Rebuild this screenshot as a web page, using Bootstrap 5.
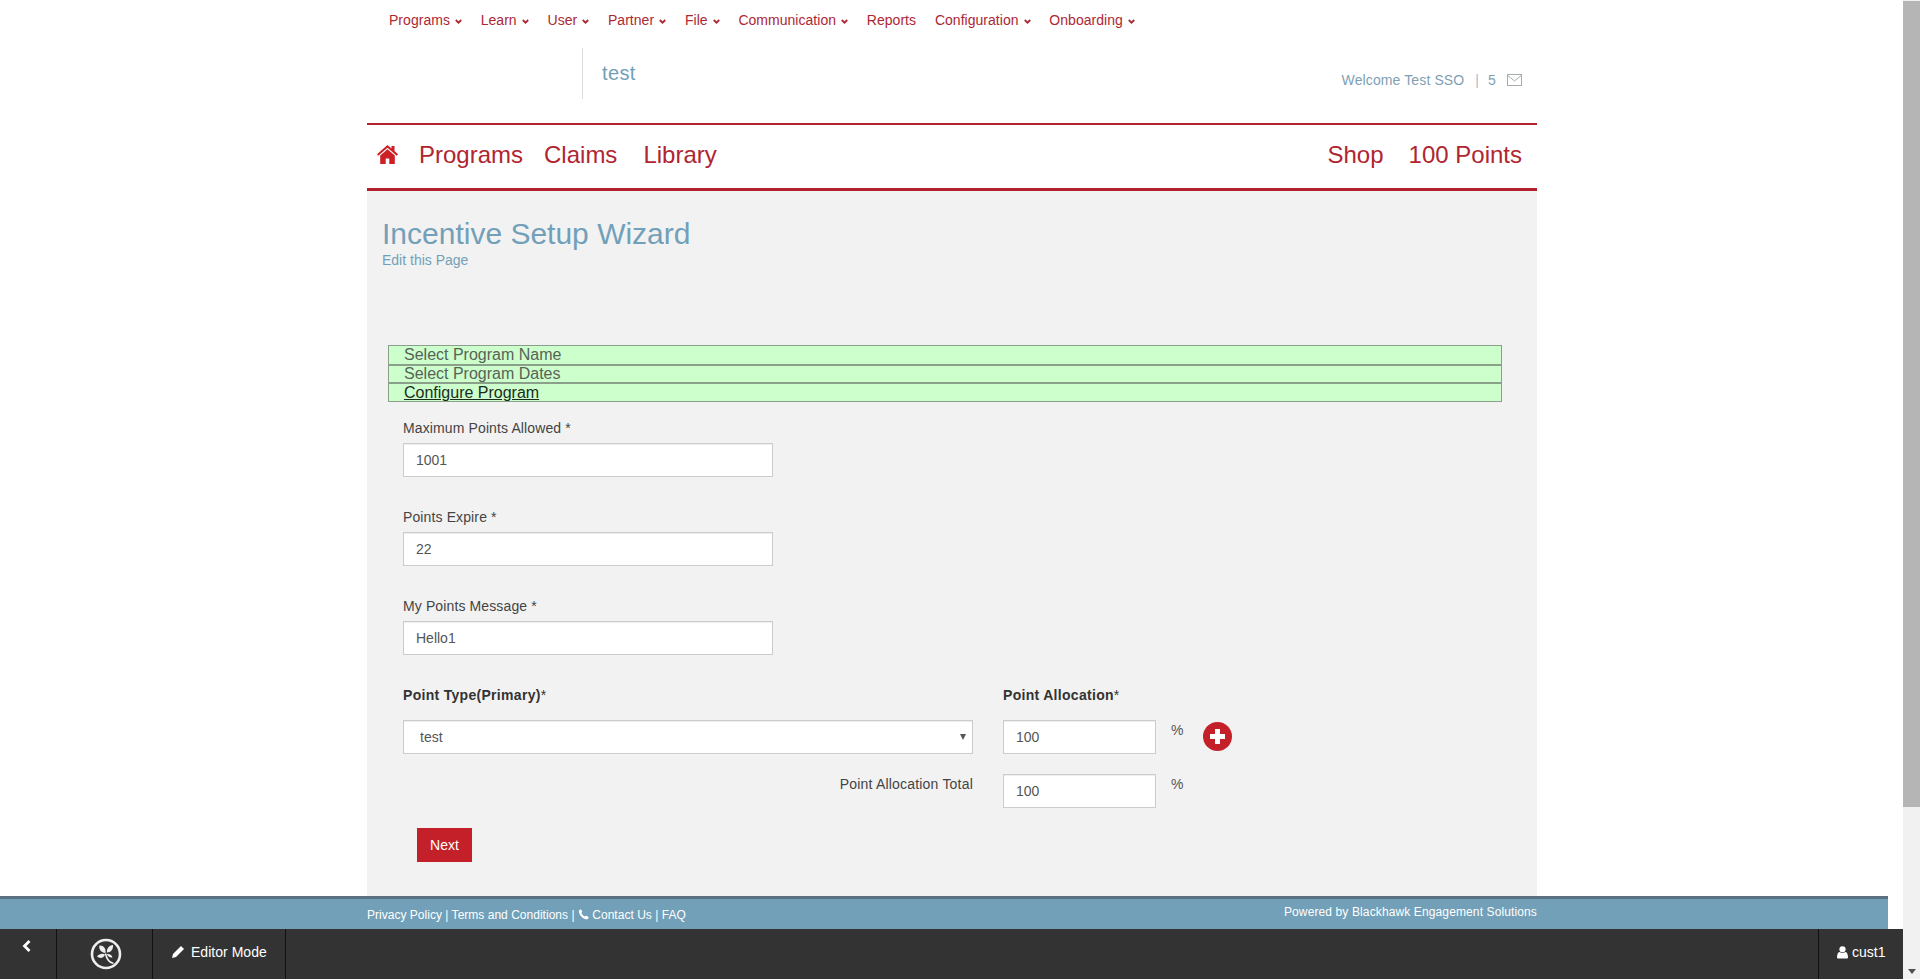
<!DOCTYPE html>
<html lang="en">
<head>
<meta charset="utf-8">
<title>Incentive Setup Wizard</title>
<link href="https://cdn.jsdelivr.net/npm/bootstrap@5.3.0/dist/css/bootstrap.min.css" rel="stylesheet">
<style>
html,body{height:979px;overflow:hidden;margin:0}
body{font-family:"Liberation Sans",Arial,sans-serif;font-size:14px;line-height:20px;color:#333;background:#fff}
a{text-decoration:none}
.shell{height:979px}
.main-col{width:1903px;height:979px}
.scroll-col{width:17px;height:979px;background:#f1f1f1}
.scroll-thumb{height:806px;background:#b5b5b5;margin-top:1px}
.scroll-arrow{margin-top:auto;margin-bottom:5px;width:0;height:0;border-left:4px solid transparent;border-right:4px solid transparent;border-top:5px solid #505050;align-self:center}
.wrap{width:1170px;margin-left:367px}
.top-nav{height:40px;padding-left:22px;gap:18.800px;color:#ad2733}
.top-nav a{color:#ad2733;font-size:14px;line-height:40px;display:flex;align-items:center;gap:5px;letter-spacing:.03px}
.chev{width:7px;height:5px;margin-top:3px}
.brand-row{height:83px}
.brand-box{margin-left:215px;margin-top:8px;height:51px;border-left:1px solid #ddd;padding-left:19px;font-size:20px;line-height:51px;color:#72a0b8;letter-spacing:.35px}
.welcome{margin-left:auto;margin-top:30px;padding-right:15px;color:#7f9fb5;font-size:14px;line-height:20px;height:20px;gap:11px;letter-spacing:.12px}
.welcome .sep{color:#a9bcc9;margin-right:-2px}
.env{width:15px;height:12px}
.main-nav{height:68px;border-top:2px solid #b5202e;border-bottom:3px solid #b5202e;font-size:24px;color:#b02530;padding:0 15px 4px 10px}
.main-nav a{color:#b02530;line-height:28px}
.home-ic{width:21px;height:19px;display:block}
.m1{margin-left:21px}.m2{margin-left:21px}.m3{margin-left:26px}
.push{margin-left:auto}
.m4{margin-left:25px}
.gray-area{background:#f2f2f2;flex:1 1 auto;min-height:0;padding-top:26px}
.page-title{font-size:30px;line-height:33px;color:#72a0b8;font-weight:400;margin:0 0 0 15px}
.edit-link{display:block;margin-left:15px;color:#72a0b8;font-size:14px;line-height:20px}
.steps{margin:75px 35px 16px 21px;border:1px solid #8aa08a}
.step-item{height:19px;line-height:18px;font-size:16px;background:#ccffcc;padding-left:15px;color:#586358;border-bottom:1px solid #8aa08a;box-sizing:border-box}
.step-item+.step-item{border-top:1px solid #8aa08a;height:18px;line-height:15px}
.step-item:last-child{border-bottom:0;color:#1d2b1d;text-decoration:underline;height:18px;line-height:17px}
.form-area{padding-left:36px}
.fgroup{margin-bottom:30px;width:370px}
.flabel{display:block;margin-bottom:5px;color:#444;line-height:20px;font-size:14px;letter-spacing:.12px}
.fld{height:34px;border:1px solid #ccc;border-radius:0;padding:6px 12px;color:#555;font-size:14px;box-shadow:inset 0 1px 1px rgba(0,0,0,.075);background-color:#fff}
.sel{width:570px;padding-left:16px;background-image:url("data:image/svg+xml,%3Csvg xmlns='http://www.w3.org/2000/svg' width='6' height='6'%3E%3Cpath d='M0 0h6L3 6z' fill='%23555'/%3E%3C/svg%3E");background-position:right 6px center;background-size:6px 6px}
.col-left{width:570px}
.col-right{margin-left:30px;width:153px}
.bold-label{font-weight:700;font-size:14px;line-height:20px;letter-spacing:.3px;color:#333}
.req{font-weight:400}
.alloc-row{margin-top:15px}
.pct{margin-left:15px;margin-top:0;color:#555;line-height:20px;font-size:14px}
.plus-btn{width:29px;height:29px;border-radius:50%;background:#c4202a;margin-left:20px;margin-top:2px}
.total-row{margin-top:20px}
.total-label{text-align:right;line-height:20px;color:#444;font-size:14px;letter-spacing:.2px}
.btn-next{margin:20px 0 0 14px;width:55px;height:34px;background:#c4202a;color:#fff;border:0;border-radius:0;font-size:14px;line-height:34px;padding:0;text-align:center}
.btn-next:hover{background:#c4202a;color:#fff}
.foot{height:33px;background:#72a0b8;border-top:3px solid #5b7080;margin-right:15px;color:#fff;font-size:12px;line-height:14px}
.foot .wrap{padding-top:9px}
.foot a{color:#fff}
.foot-left{letter-spacing:.02px}
.foot-right{margin-left:auto;margin-top:-3px;letter-spacing:.12px}
.ph-ic{width:11px;height:11px;display:inline-block;vertical-align:-1px}
.tool{height:50px;background:#333;color:#fff;font-size:14px}
.tool-cell{height:50px;border-right:1px solid #111;flex:none}
.tc1{width:57px;padding-left:22px;padding-top:11px}
.tc2{width:96px;justify-content:center;padding-left:3px}
.tc3{width:133px;padding-left:18px;gap:6px;padding-bottom:4px;letter-spacing:.03px}
.tc4{margin-left:auto;border-right:0;border-left:1px solid #111;width:85px;padding-left:18px;gap:4px;padding-bottom:4px}
</style>
</head>
<body>
<div class="shell d-flex">
  <div class="main-col d-flex flex-column">
    <div class="wrap d-flex top-nav">
      <a href="#">Programs <svg class="chev" viewBox="0 0 7 5"><path d="M.8 1l2.700 2.700L6.200 1" fill="none" stroke="#ad2733" stroke-width="1.800"/></svg></a>
      <a href="#">Learn <svg class="chev" viewBox="0 0 7 5"><path d="M.8 1l2.700 2.700L6.200 1" fill="none" stroke="#ad2733" stroke-width="1.800"/></svg></a>
      <a href="#">User <svg class="chev" viewBox="0 0 7 5"><path d="M.8 1l2.700 2.700L6.200 1" fill="none" stroke="#ad2733" stroke-width="1.800"/></svg></a>
      <a href="#">Partner <svg class="chev" viewBox="0 0 7 5"><path d="M.8 1l2.700 2.700L6.200 1" fill="none" stroke="#ad2733" stroke-width="1.800"/></svg></a>
      <a href="#">File <svg class="chev" viewBox="0 0 7 5"><path d="M.8 1l2.700 2.700L6.200 1" fill="none" stroke="#ad2733" stroke-width="1.800"/></svg></a>
      <a href="#">Communication <svg class="chev" viewBox="0 0 7 5"><path d="M.8 1l2.700 2.700L6.200 1" fill="none" stroke="#ad2733" stroke-width="1.800"/></svg></a>
      <a href="#">Reports</a>
      <a href="#">Configuration <svg class="chev" viewBox="0 0 7 5"><path d="M.8 1l2.700 2.700L6.200 1" fill="none" stroke="#ad2733" stroke-width="1.800"/></svg></a>
      <a href="#">Onboarding <svg class="chev" viewBox="0 0 7 5"><path d="M.8 1l2.700 2.700L6.200 1" fill="none" stroke="#ad2733" stroke-width="1.800"/></svg></a>
    </div>
    <div class="wrap d-flex brand-row">
      <div class="brand-box">test</div>
      <div class="welcome d-flex align-items-center">
        <span>Welcome Test SSO</span><span class="sep">|</span><span>5</span>
        <svg class="env" viewBox="0 0 15 12"><rect x=".5" y=".5" width="14" height="11" fill="none" stroke="#a5abae"/><path d="M.8 1.500l6.700 5.500 6.700-5.500" fill="none" stroke="#a5abae"/></svg>
      </div>
    </div>
    <div class="wrap d-flex align-items-center main-nav">
      <a href="#"><svg class="home-ic" viewBox="0 0 21 19"><path d="M10.500 0L0 9.200l1.300 1.500 9.200-8 9.200 8L21 9.200 17.500 6V1h-3v2.400z" fill="#cc1f26"/><path d="M10.500 4.200L3.200 10.600V19h5.500v-5.500h3.600V19h5.500v-8.400z" fill="#cc1f26"/></svg></a>
      <a href="#" class="m1">Programs</a>
      <a href="#" class="m2">Claims</a>
      <a href="#" class="m3">Library</a>
      <a href="#" class="push">Shop</a>
      <a href="#" class="m4">100 Points</a>
    </div>
    <div class="wrap gray-area">
      <h1 class="page-title">Incentive Setup Wizard</h1>
      <a href="#" class="edit-link">Edit this Page</a>
      <div class="steps">
        <div class="step-item">Select Program Name</div>
        <div class="step-item">Select Program Dates</div>
        <div class="step-item">Configure Program</div>
      </div>
      <div class="form-area">
        <div class="fgroup"><label class="flabel" for="f1">Maximum Points Allowed *</label><input id="f1" class="form-control fld" value="1001"></div>
        <div class="fgroup"><label class="flabel" for="f2">Points Expire *</label><input id="f2" class="form-control fld" value="22"></div>
        <div class="fgroup"><label class="flabel" for="f3">My Points Message *</label><input id="f3" class="form-control fld" value="Hello1"></div>
        <div class="d-flex">
          <div class="col-left bold-label">Point Type(Primary)<span class="req">*</span></div>
          <div class="col-right bold-label text-nowrap">Point Allocation<span class="req">*</span></div>
        </div>
        <div class="d-flex alloc-row">
          <select class="form-select fld sel"><option>test</option></select>
          <div class="col-right"><input class="form-control fld" value="100"></div>
          <div class="pct">%</div>
          <div class="plus-btn d-flex align-items-center justify-content-center"><svg width="17" height="17" viewBox="0 0 17 17"><path d="M6 1h5v5h5v5h-5v5H6v-5H1V6h5z" fill="#fff"/></svg></div>
        </div>
        <div class="d-flex total-row">
          <div class="col-left total-label">Point Allocation Total</div>
          <div class="col-right"><input class="form-control fld" value="100"></div>
          <div class="pct">%</div>
        </div>
        <button class="btn btn-next" type="button">Next</button>
      </div>
    </div>
    <div class="foot">
      <div class="wrap d-flex">
        <div class="foot-left"><a href="#">Privacy Policy</a> | <a href="#">Terms and Conditions</a> | <svg class="ph-ic" viewBox="0 0 10 10"><path d="M2.600.3L.8 1.300C.4 5 4.600 9.700 8.800 9.400l1-1.900-2.400-1.600-1.100 1C5 6.400 3.600 5 3 3.700l1-1.100z" fill="#fff"/></svg> <a href="#">Contact Us</a> | <a href="#">FAQ</a></div>
        <div class="foot-right">Powered by Blackhawk Engagement Solutions</div>
      </div>
    </div>
    <div class="tool d-flex">
      <div class="tool-cell tc1"><svg class="d-block" width="10" height="12" viewBox="0 0 10 12"><path d="M7.500 1L2.500 6l5 5" fill="none" stroke="#fff" stroke-width="2.800"/></svg></div>
      <div class="tool-cell tc2 d-flex align-items-center">
        <svg width="32" height="33" viewBox="0 0 32 33"><circle cx="16" cy="16" r="14" fill="none" stroke="#eee" stroke-width="2.600"/><path d="M15.500 15C10.500 14.500 8.500 10.500 9.500 7.500c3.500-.5 7 3 6 7.500zM17 14.500c-.5-4 2-7 6-7.500.5 4-2 7.500-6 7.500zM15 16.500c-2-1.500-6-1-8 2 3 2.500 7 1.500 8-2zM17 16c2.500-.5 5 1 5.500 3.500-2.500.5-5-1-5.500-3.500z" fill="#eee"/><path d="M15.500 15.500c1 5 4 9 8 10" fill="none" stroke="#eee" stroke-width="1.600"/></svg>
      </div>
      <div class="tool-cell tc3 d-flex align-items-center">
        <svg width="14" height="14" viewBox="0 0 14 14"><path d="M10 1l3 3-8 8-4 1 1-4z" fill="#fff"/></svg><span>Editor Mode</span>
      </div>
      <div class="tool-cell tc4 d-flex align-items-center">
        <svg width="11" height="14" viewBox="0 0 12 14"><circle cx="6" cy="4" r="3.400" fill="#fff"/><path d="M0 13c0-4 1.500-6 3-6 1.500 1.300 4.500 1.300 6 0 1.500 0 3 2 3 6 0 .7-.6 1-1 1H1c-.5 0-1-.3-1-1z" fill="#fff"/></svg><span>cust1</span>
      </div>
    </div>
  </div>
  <div class="scroll-col d-flex flex-column">
    <div class="scroll-thumb"></div>
    <div class="scroll-arrow"></div>
  </div>
</div>
<script src="https://cdn.jsdelivr.net/npm/bootstrap@5.3.0/dist/js/bootstrap.bundle.min.js"></script>
</body>
</html>
